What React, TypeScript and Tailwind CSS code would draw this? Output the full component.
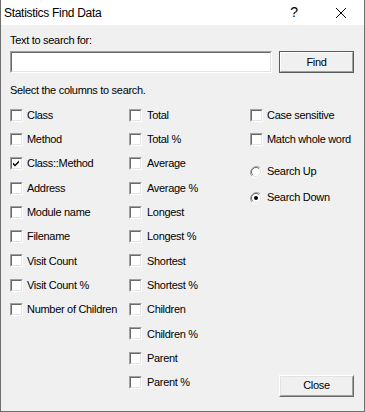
import React from "react";

const font = { fontFamily: '"Liberation Sans", Arial, sans-serif' };

const Check = ({ checked = false }: { checked?: boolean }) => (
  <span className="flex h-[13px] w-[13px] shrink-0 border border-t-[#a0a0a0] border-l-[#a0a0a0] border-b-white border-r-white">
    <span className="flex flex-1 items-center justify-center border border-t-[#696969] border-l-[#696969] border-b-[#e3e3e3] border-r-[#e3e3e3] bg-white">
      {checked && (
        <svg width="9" height="9" viewBox="0 0 9 9">
          <path d="M1 3.5 L3 5.5 L7 1.5 L7 3.5 L3 7.5 L1 5.5 Z" fill="#000" />
        </svg>
      )}
    </span>
  </span>
);

const Radio = ({ on = false }: { on?: boolean }) => (
  <svg width="12" height="12" viewBox="0 0 12 12" className="shrink-0">
    <path d="M10.2 1.8 A6 6 0 0 0 1.8 10.2" fill="none" stroke="#a0a0a0" strokeWidth="1" />
    <path d="M1.8 10.2 A6 6 0 0 0 10.2 1.8" fill="none" stroke="#ffffff" strokeWidth="1" />
    <circle cx="6" cy="6" r="4.5" fill="#fff" />
    <path d="M9.2 2.8 A4.5 4.5 0 0 0 2.8 9.2" fill="none" stroke="#696969" strokeWidth="1" />
    <path d="M2.8 9.2 A4.5 4.5 0 0 0 9.2 2.8" fill="none" stroke="#e3e3e3" strokeWidth="1" />
    {on && <circle cx="6" cy="6" r="2" fill="#000" />}
  </svg>
);

const Row = ({ label, checked, gap }: { label: string; checked?: boolean; gap: string }) => (
  <div className={`flex h-[24.3px] items-center ${gap}`}>
    <Check checked={checked} />
    <span>{label}</span>
  </div>
);

const col1 = ["Class", "Method", "Class::Method", "Address", "Module name", "Filename", "Visit Count", "Visit Count %", "Number of Children"];
const col2 = ["Total", "Total %", "Average", "Average %", "Longest", "Longest %", "Shortest", "Shortest %", "Children", "Children %", "Parent", "Parent %"];

export default function App() {
  return (
    <div
      className="flex h-[412px] w-[365px] flex-col overflow-hidden border-x border-b border-[#6e6e6e] bg-[#f0f0f0] text-[11px] tracking-[-0.3px] text-black"
      style={font}
    >
      {/* title bar */}
      <div className="flex h-[25px] shrink-0 items-center bg-white pl-[3px]">
        <span className="text-[12px] tracking-[-0.3px]">Statistics Find Data</span>
        <span className="ml-auto mr-[37px] text-[14px] tracking-normal">?</span>
        <svg width="12" height="12" viewBox="0 0 12 12" className="mr-[17px]">
          <path d="M1 1 L11 11 M11 1 L1 11" stroke="#000" strokeWidth="1" />
        </svg>
      </div>

      <div className="flex flex-1 flex-col px-[9px]">
        <div className="mt-[9px] leading-[13px]">Text to search for:</div>
        <div className="mt-[4px] flex items-center">
          <div className="h-[22px] w-[262px] border border-t-[#a0a0a0] border-l-[#a0a0a0] border-b-white border-r-white">
            <div className="h-full border border-t-[#696969] border-l-[#696969] border-b-[#e3e3e3] border-r-[#e3e3e3] bg-white" />
          </div>
          <button className="ml-[7px] h-[22px] w-[75px] border border-[#5a5a5a] bg-[#f0f0f0]">
            <div className="flex h-full items-center justify-center border border-t-white border-l-white border-b-[#a0a0a0] border-r-[#a0a0a0]">
              Find
            </div>
          </button>
        </div>
        <div className="mt-[11px] leading-[13px]">Select the columns to search.</div>

        <div className="mt-[6px] flex">
          <div className="flex w-[119px] flex-col">
            {col1.map((l) => (
              <Row key={l} label={l} checked={l === "Class::Method"} gap="gap-[4px]" />
            ))}
          </div>
          <div className="flex w-[121px] flex-col">
            {col2.map((l) => (
              <Row key={l} label={l} gap="gap-[5px]" />
            ))}
          </div>
          <div className="flex flex-1 flex-col">
            <Row label="Case sensitive" gap="gap-[4px]" />
            <Row label="Match whole word" gap="gap-[4px]" />
            <div className="mt-[7px] flex h-[26px] items-center gap-[5px]">
              <Radio />
              <span>Search Up</span>
            </div>
            <div className="flex h-[26px] items-center gap-[5px]">
              <Radio on />
              <span>Search Down</span>
            </div>
            <button className="mb-[-2px] ml-[29px] mt-auto h-[22px] w-[75px] border border-t-white border-l-white border-b-[#696969] border-r-[#696969] bg-[#f0f0f0]">
              <div className="flex h-full items-center justify-center border border-t-[#e3e3e3] border-l-[#e3e3e3] border-b-[#a0a0a0] border-r-[#a0a0a0]">
                Close
              </div>
            </button>
          </div>
        </div>
      </div>
    </div>
  );
}
